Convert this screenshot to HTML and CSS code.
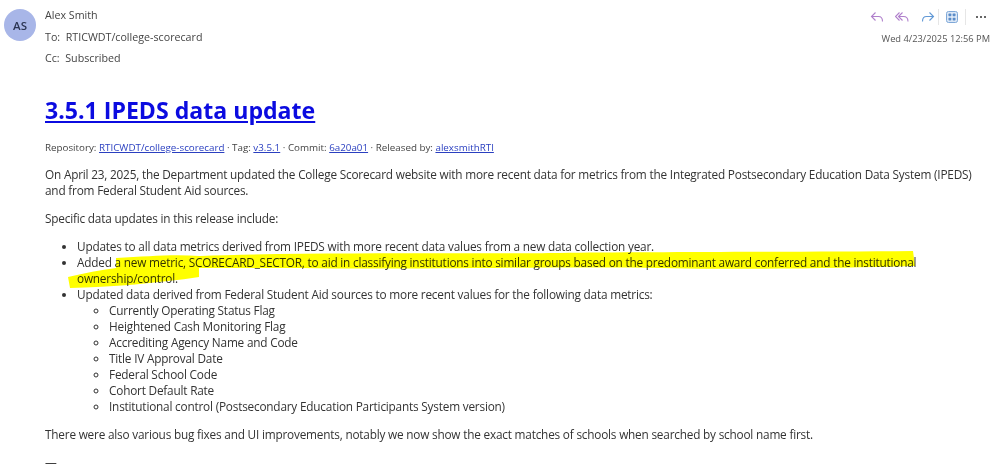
FILE: index.html
```html
<!DOCTYPE html>
<html lang="en">
<head>
<meta charset="utf-8">
<title>3.5.1 IPEDS data update</title>
<link rel="stylesheet" href="styles.css">
</head>
<body>
<div class="message">
  <div class="avatar">AS</div>
  <div class="main">
    <header class="head">
      <div class="people">
        <div class="row">Alex Smith</div>
        <div class="row">To:&nbsp; RTICWDT/college-scorecard</div>
        <div class="row">Cc:&nbsp; Subscribed</div>
      </div>
      <div class="side">
        <div class="actions">
          <svg class="ic arrow" viewBox="0 0 14 14"><path d="M5.5 2.5 1.5 6.5l4 4M1.5 6.500h7c2.500 0 4 1.500 4 5" fill="none" stroke="#b080cc" stroke-width="1.1"/></svg>
          <svg class="ic arrow" viewBox="0 0 14 14"><path d="M4.500 2.500.5 6.500l4 4M7.500 2.500l-4 4 4 4M3.500 6.500h5c2.500 0 4.500 1.500 4.500 5" fill="none" stroke="#b080cc" stroke-width="1.1"/></svg>
          <svg class="ic arrow" viewBox="0 0 14 14"><path d="m8.500 2.500 4 4-4 4M12.500 6.500h-7c-2.500 0-4 1.500-4 5" fill="none" stroke="#6299d6" stroke-width="1.1"/></svg>
          <span class="sep"></span>
          <svg class="ic" viewBox="0 0 14 14"><rect x="1.500" y="1.500" width="11" height="11" rx="2" fill="#dbe7f6" stroke="#7fa8d8"/><rect x="3.500" y="3.500" width="2.800" height="2.800" rx=".8" fill="#5b8cc8"/><rect x="7.700" y="3.500" width="2.800" height="2.800" rx=".8" fill="#5b8cc8"/><rect x="3.500" y="7.700" width="2.800" height="2.800" rx=".8" fill="#5b8cc8"/><rect x="7.700" y="7.700" width="2.800" height="2.800" rx=".8" fill="#5b8cc8"/></svg>
          <span class="sep"></span>
          <span class="more"><i></i><i></i><i></i></span>
        </div>
        <div class="date">Wed 4/23/2025 12:56 PM</div>
      </div>
    </header>
    <article class="body">
      <h1 class="title"><a href="#">3.5.1 IPEDS data update</a></h1>
      <p class="meta">Repository: <a href="#">RTICWDT/college-scorecard</a> · Tag: <a href="#">v3.5.1</a> · Commit: <a href="#">6a20a01</a> · Released by: <a href="#">alexsmithRTI</a></p>
      <p class="para">On April 23, 2025, the Department updated the College Scorecard website with more recent data for metrics from the Integrated Postsecondary Education Data System (IPEDS) and from Federal Student Aid sources.</p>
      <p class="para">Specific data updates in this release include:</p>
      <ul class="list">
        <li>Updates to all data metrics derived from IPEDS with more recent data values from a new data collection year.</li>
        <li>Added a new metric, SCORECARD_SECTOR, to aid in classifying institutions into similar groups based on the predominant award conferred and the institutional ownership/control.</li>
        <li>Updated data derived from Federal Student Aid sources to more recent values for the following data metrics:
          <ul class="sublist">
            <li>Currently Operating Status Flag</li>
            <li>Heightened Cash Monitoring Flag</li>
            <li>Accrediting Agency Name and Code</li>
            <li>Title IV Approval Date</li>
            <li>Federal School Code</li>
            <li>Cohort Default Rate</li>
            <li>Institutional control (Postsecondary Education Participants System version)</li>
          </ul>
        </li>
      </ul>
      <p class="para">There were also various bug fixes and UI improvements, notably we now show the exact matches of schools when searched by school name first.</p>
      <p class="para">—</p>
    </article>
  </div>
</div>
<svg class="marker" viewBox="0 0 1000 473" aria-hidden="true">
  <path class="ink" d="M116 258C150 256 175 254 200 256C300 252 480 254 560 253S800 252 913 251L915 266C840 268 750 270 660 268C560 266 400 270 300 268C260 268 225 268 199 268L199 277C160 283 110 287 70 288L68 277C85 273 100 270 116 268Z"/>
</svg>
</body>
</html>
```
FILE: styles.css
```css
html, body { margin: 0; padding: 0; height: 473px; overflow: hidden; background: #fff; }
body { font-family: "Open Sans", "Noto Sans", sans-serif; color: #333; font-size: 12px; position: relative; }
.message { display: flex; padding: 6px 10px 0 4px; gap: 9px; }
.avatar { width: 32px; height: 32px; flex: none; margin-top: 3px; border-radius: 50%; background: #a8b6e8; color: #2b3553; font-size: 11.5px; font-weight: 600; display: flex; align-items: center; justify-content: center; }
.main { flex: 1; min-width: 0; }
.head { display: flex; justify-content: space-between; height: 64px; }
.people { font-size: 10.7px; color: #444; margin-top: -1px; }
.row { height: 21.5px; line-height: 20px; }
.side { display: flex; flex-direction: column; align-items: flex-end; }
.actions { display: flex; align-items: center; gap: 6px; height: 22px; }
.ic { width: 14px; height: 14px; }
.arrow { margin-right: 5.5px; }
.arrow + .sep { margin-left: -8px; }
.sep { width: 1px; height: 16px; background: #e6e6e6; }
.more { display: flex; gap: 2px; width: 18px; justify-content: center; }
.more i { width: 2px; height: 2px; border-radius: 50%; background: #333; }
.date { font-size: 9.3px; color: #555; margin-top: 4px; }
.body { padding-top: 23.5px; line-height: 16px; font-size: 11.8px; letter-spacing: -0.2px; }
.title { margin: 0; font-size: 23.1px; line-height: 32px; font-weight: 700; letter-spacing: 0; }
.title a { color: #0b0be0; }
.meta { margin: 14px 0 0; font-size: 9.8px; line-height: 16px; color: #444; letter-spacing: 0; }
.meta a { color: #2a3fc0; }
.para { margin: 10px 0 12px; line-height: 16px; }
.list { margin: 0 0 12px; padding-left: 32px; }
.sublist { margin: 0; padding-left: 32px; list-style-type: circle; }
.marker { position: absolute; inset: 0; width: 1000px; height: 473px; pointer-events: none; }
.ink { fill: #ffff00; mix-blend-mode: multiply; }
```
